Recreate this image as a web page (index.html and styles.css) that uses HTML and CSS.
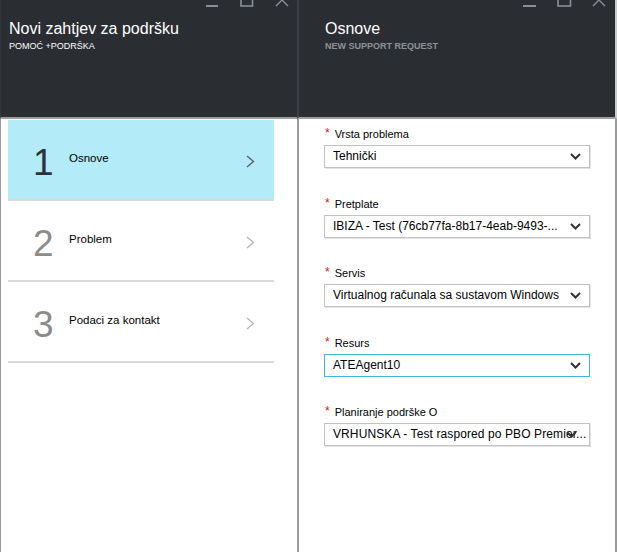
FILE: index.html
```html
<!DOCTYPE html>
<html lang="hr">
<head>
<meta charset="utf-8">
<title>Novi zahtjev za podršku</title>
<link rel="stylesheet" href="styles.css">
</head>
<body>
<div class="page">
  <section class="blade blade-steps">
    <header class="blade-header">
      <div class="controls controls-left">
        <svg width="84" height="8" viewBox="0 0 84 8" aria-hidden="true">
          <rect x="0" y="5" width="12" height="2" fill="#8b8f95"/>
          <rect x="35" y="-6" width="11.5" height="12" fill="none" stroke="#8b8f95" stroke-width="1.6"/>
          <path d="M70 -6 L82 6 M82 -6 L70 6" stroke="#8b8f95" stroke-width="1.4" fill="none"/>
        </svg>
      </div>
      <h1 class="title">Novi zahtjev za podršku</h1>
      <div class="subtitle">POMOĆ +PODRŠKA</div>
    </header>
    <div class="blade-body steps">
      <div class="step step-active">
        <span class="step-num">1</span>
        <span class="step-label">Osnove</span>
        <svg class="step-chev" width="9" height="13" viewBox="0 0 9 13" aria-hidden="true"><path d="M1 1 L7.5 6.5 L1 12" fill="none" stroke="#58616c" stroke-width="1.4"/></svg>
      </div>
      <div class="step">
        <span class="step-num">2</span>
        <span class="step-label">Problem</span>
        <svg class="step-chev" width="9" height="13" viewBox="0 0 9 13" aria-hidden="true"><path d="M1 1 L7.5 6.5 L1 12" fill="none" stroke="#b4b4b4" stroke-width="1.3"/></svg>
      </div>
      <div class="step">
        <span class="step-num">3</span>
        <span class="step-label">Podaci za kontakt</span>
        <svg class="step-chev" width="9" height="13" viewBox="0 0 9 13" aria-hidden="true"><path d="M1 1 L7.5 6.5 L1 12" fill="none" stroke="#b4b4b4" stroke-width="1.3"/></svg>
      </div>
    </div>
  </section>

  <section class="blade blade-form">
    <header class="blade-header">
      <div class="controls controls-right">
        <svg width="84" height="8" viewBox="0 0 84 8" aria-hidden="true">
          <rect x="0" y="5" width="13" height="2" fill="#8b8f95"/>
          <rect x="35" y="-6" width="12.5" height="12" fill="none" stroke="#8b8f95" stroke-width="1.6"/>
          <path d="M70 -6 L82 6 M82 -6 L70 6" stroke="#8b8f95" stroke-width="1.4" fill="none"/>
        </svg>
      </div>
      <h1 class="title title-form">Osnove</h1>
      <div class="subtitle subtitle-muted">NEW SUPPORT REQUEST</div>
    </header>
    <div class="blade-body form">
      <div class="field">
        <div class="field-label"><span class="req">*</span>Vrsta problema</div>
        <div class="select"><span class="select-value">Tehnički</span><svg class="select-chev" width="11" height="7" viewBox="0 0 11 7" aria-hidden="true"><path d="M1 1 L5.5 5.5 L10 1" fill="none" stroke="#333" stroke-width="2"/></svg></div>
      </div>
      <div class="field">
        <div class="field-label"><span class="req">*</span>Pretplate</div>
        <div class="select"><span class="select-value">IBIZA - Test (76cb77fa-8b17-4eab-9493-...</span><svg class="select-chev" width="11" height="7" viewBox="0 0 11 7" aria-hidden="true"><path d="M1 1 L5.5 5.5 L10 1" fill="none" stroke="#333" stroke-width="2"/></svg></div>
      </div>
      <div class="field">
        <div class="field-label"><span class="req">*</span>Servis</div>
        <div class="select"><span class="select-value">Virtualnog računala sa sustavom Windows</span><svg class="select-chev" width="11" height="7" viewBox="0 0 11 7" aria-hidden="true"><path d="M1 1 L5.5 5.5 L10 1" fill="none" stroke="#333" stroke-width="2"/></svg></div>
      </div>
      <div class="field">
        <div class="field-label"><span class="req">*</span>Resurs</div>
        <div class="select select-focus"><span class="select-value">ATEAgent10</span><svg class="select-chev" width="11" height="7" viewBox="0 0 11 7" aria-hidden="true"><path d="M1 1 L5.5 5.5 L10 1" fill="none" stroke="#333" stroke-width="2"/></svg></div>
      </div>
      <div class="field">
        <div class="field-label"><span class="req">*</span>Planiranje podrške O</div>
        <div class="select"><span class="select-value select-value-long">VRHUNSKA - Test raspored po PBO Premier...</span><svg class="select-chev select-chev-over" width="11" height="7" viewBox="0 0 11 7" aria-hidden="true"><path d="M1 1 L5.5 5.5 L10 1" fill="none" stroke="#333" stroke-width="2"/></svg></div>
      </div>
    </div>
  </section>
</div>
</body>
</html>
```

FILE: styles.css
```css
* {
  box-sizing: border-box;
}

html, body {
  margin: 0;
  padding: 0;
  background: #ffffff;
}

body {
  font-family: "Liberation Sans", Arial, sans-serif;
  color: #000;
}

.page {
  display: flex;
  height: 552px;
  width: 617px;
}

.blade {
  display: flex;
  flex-direction: column;
  height: 100%;
}

.blade-steps {
  width: 297px;
  flex: none;
}

.blade-form {
  flex: 1;
}

.blade-header {
  height: 119px;
  flex: none;
  background: #2a2e33;
  border-bottom: 2px solid #9c9ea1;
  color: #fff;
  display: flex;
  flex-direction: column;
}

.blade-steps .blade-header {
  border-left: 1px solid #34383d;
  padding-left: 8px;
}

.blade-form .blade-header {
  border-left: 2px solid #3d4147;
  border-right: 2px solid #c9cacc;
  padding-left: 26px;
}

.controls {
  height: 8px;
  display: flex;
  justify-content: flex-end;
  overflow: hidden;
}

.controls svg {
  display: block;
  overflow: hidden;
}

.controls-left {
  margin-right: 7px;
}

.controls-right {
  margin-right: 8px;
}

.title {
  margin: 11px 0 0 0;
  font-size: 16px;
  line-height: 20px;
  font-weight: normal;
  color: #ffffff;
}

.subtitle {
  margin-top: 2px;
  font-size: 9px;
  line-height: 11px;
  color: #ffffff;
}

.subtitle-muted {
  color: #8e9297;
  font-weight: bold;
}

.blade-body {
  flex: 1;
  background: #fff;
}

.steps {
  border-left: 1px solid #9a9a9a;
  padding: 1px 23px 0 7px;
}

.step {
  height: 81px;
  border-bottom: 2px solid #d9d9d9;
  display: flex;
  align-items: center;
  padding-left: 25px;
  padding-right: 19px;
}

.step-active {
  background: #b3ebf9;
}

.step-num {
  width: 36px;
  flex: none;
  font-size: 37px;
  line-height: 37px;
  color: #8c8c8c;
  padding-top: 5px;
}

.step-active .step-num {
  color: #2e3238;
}

.step-label {
  flex: 1;
  font-size: 11.5px;
  line-height: 14px;
  color: #000;
  padding-bottom: 4px;
}

.step-chev {
  display: block;
  flex: none;
  margin-top: 3px;
}

.form {
  border-left: 2px solid #9a9a9a;
  border-right: 2px solid #9a9a9a;
  padding: 7px 0 0 25px;
}

.field {
  width: 266px;
  margin-bottom: 27.5px;
}

.field-label {
  font-size: 11px;
  line-height: 14px;
  height: 14px;
  margin-bottom: 5px;
  color: #000;
  white-space: nowrap;
}

.req {
  color: #e3121b;
  font-size: 12px;
  margin-left: 1px;
  margin-right: 5px;
  vertical-align: 1px;
}

.select {
  position: relative;
  height: 23px;
  border: 1px solid #c2c2c2;
  box-shadow: 1px 1px 0 #e4e4e4;
  display: flex;
  align-items: center;
  padding-left: 8px;
  padding-right: 8px;
  background: #fff;
}

.select-focus {
  border-color: #3fb6e6;
  box-shadow: none;
}

.select-value {
  flex: 1;
  font-size: 12px;
  line-height: 21px;
  white-space: nowrap;
  overflow: hidden;
}

.select-value-long {
  overflow: visible;
  letter-spacing: 0.1px;
}

.select-chev {
  display: block;
  flex: none;
  margin-left: 4px;
}

.select-chev-over {
  position: absolute;
  right: 12px;
  top: 7px;
  margin-left: 0;
}
```
